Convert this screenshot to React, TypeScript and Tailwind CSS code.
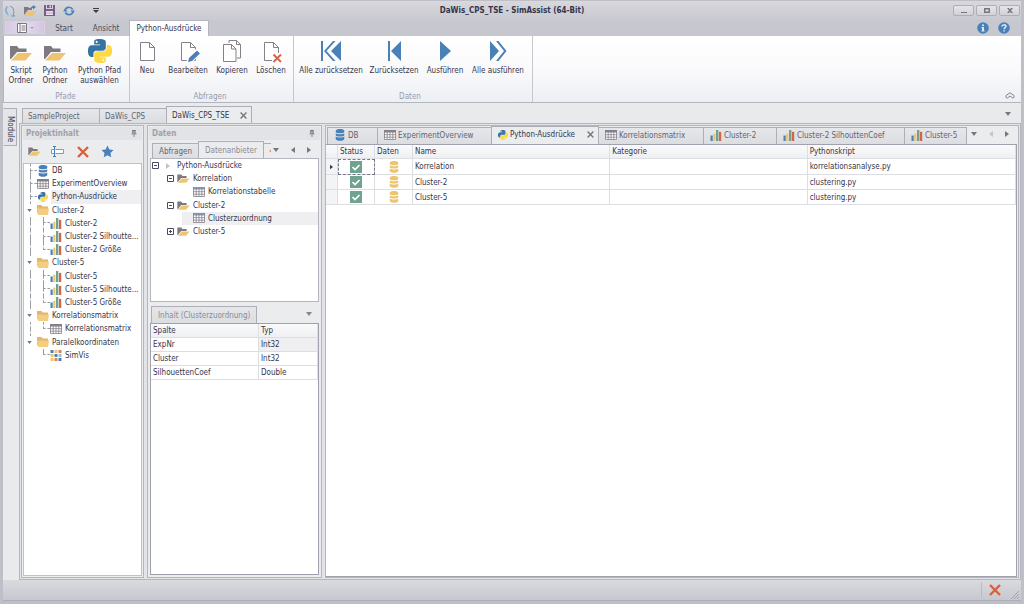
import React from "react";

type IconProps = { className?: string };

const PY_PATH =
  "M14.25.18l.9.2.73.26.59.3.45.32.34.34.25.34.16.33.1.3.04.26.02.2-.01.13V8.5l-.05.63-.13.55-.21.46-.26.38-.3.31-.33.25-.35.19-.35.14-.33.1-.3.07-.26.04-.21.02H8.77l-.69.05-.59.14-.5.22-.41.27-.33.32-.27.35-.2.36-.15.37-.1.35-.07.32-.04.27-.02.21v3.06H3.17l-.21-.03-.28-.07-.32-.12-.35-.18-.36-.26-.36-.36-.35-.46-.32-.59-.28-.73-.21-.88-.14-1.05-.05-1.23.06-1.22.16-1.04.24-.87.32-.71.36-.57.4-.44.42-.33.42-.24.4-.16.36-.1.32-.05.24-.01h.16l.06.01h8.16v-.83H6.18l-.01-2.75-.02-.37.05-.34.11-.31.17-.28.25-.26.31-.23.38-.2.44-.18.51-.15.58-.12.64-.1.71-.06.77-.04.84-.02 1.27.05zm-6.3 1.98l-.23.33-.08.41.08.41.23.34.33.22.41.09.41-.09.33-.22.23-.34.08-.41-.08-.41-.23-.33-.33-.22-.41-.09-.41.09z";

function Svg({ box, className, children }: { box: string; className?: string; children: React.ReactNode }) {
  return (
    <svg viewBox={box} className={`shrink-0 ${className ?? ""}`} aria-hidden="true">
      {children}
    </svg>
  );
}

const Python = ({ className }: IconProps) => (
  <Svg box="0 0 24 24" className={className}>
    <path fill="#3673a5" d={PY_PATH} />
    <path fill="#ffd845" d={PY_PATH} transform="rotate(180 12 12)" />
  </Svg>
);

const OpenFolder = ({ className }: IconProps) => (
  <Svg box="0 0 22 16" className={className}>
    <path fill="#7f7a80" d="M0 1h7l2 2.500h7.500V7H7L1 14H0z" />
    <path fill="#eec471" d="M8 8h14l-6.500 7.500H1z" />
  </Svg>
);

const ClosedFolder = ({ className }: IconProps) => (
  <Svg box="0 0 12 10" className={className}>
    <path fill="#e3b565" d="M0 0h4.500l1 1.500H11V9H1L0 7z" />
    <path fill="#f2cd82" d="M0 3.500h12L11 10H1.200z" />
  </Svg>
);

const Database = ({ className }: IconProps) => (
  <Svg box="0 0 12 14" className={className}>
    <path
      fill="currentColor"
      d="M1 2c0-2.600 10-2.600 10 0v1.200c0 2.400-10 2.400-10 0zM1 5c2 1.500 8 1.500 10 0v1.900c0 2.400-10 2.400-10 0zM1 8.700c2 1.500 8 1.500 10 0v2.900c0 2.800-10 2.800-10 0z"
    />
  </Svg>
);

const Grid = ({ className }: IconProps) => (
  <Svg box="0 0 12 10" className={className}>
    <path fill="#fff" d="M.5.500h11v9H.5z" />
    <path fill="currentColor" d="M0 0h12v2.500H0z" />
    <path stroke="#85808a" strokeWidth=".8" fill="none" d="M.5 0v9.500h11V0M0 4.700h12M0 7.200h12M3.200 0v9.500M6 0v9.500M8.800 0v9.500" />
  </Svg>
);

const Bars = ({ className }: IconProps) => (
  <Svg box="0 0 12 12" className={className}>
    <path fill="#4a80b8" d="M0 6h2.400v6H0z" />
    <path fill="#eec471" d="M3 4h2.400v8H3z" />
    <path fill="#6fa38f" d="M6 0h2.600v12H6z" />
    <path fill="#d3664a" d="M9.200 2h2.500v10H9.200z" />
  </Svg>
);

const Mosaic = ({ className }: IconProps) => (
  <Svg box="0 0 11 11" className={className}>
    <path fill="#4a80b8" d="M0 0h3v3H0zM4 4h3v3H4zM8 8h3v3H8z" />
    <path fill="#eec471" d="M4 0h3v3H4zM0 4h3v3H0zM0 8h3v3H0z" />
    <path fill="#dd8260" d="M8 0h3v3H8zM4 8h3v3H4z" />
    <path fill="#a3bfd7" d="M8 4h3v3H8z" />
  </Svg>
);

const Cross = ({ className }: IconProps) => (
  <Svg box="0 0 12 12" className={className}>
    <path d="M1 1l10 10M11 1L1 11" stroke="currentColor" strokeWidth="2.400" fill="none" />
  </Svg>
);

const Pin = ({ className }: IconProps) => (
  <Svg box="0 0 7 8" className={className}>
    <path d="M2 0h3v4H2z" fill="#aaaab2" />
    <path d="M1.500.5h4M2 0v4M4.700 0v4.500M.5 4.500h6M3.500 5v3" stroke="#747480" fill="none" />
  </Svg>
);

const Down = ({ className }: IconProps) => (
  <Svg box="0 0 6 4" className={className}>
    <path d="M0 0h6L3 4z" fill="currentColor" />
  </Svg>
);

const Side = ({ left, className }: IconProps & { left?: boolean }) => (
  <Svg box="0 0 4 6" className={className}>
    <path d={left ? "M4 0v6L0 3z" : "M0 0v6l4-3z"} fill="currentColor" />
  </Svg>
);

const Page = ({ className, extra, double }: IconProps & { extra?: "edit" | "delete"; double?: boolean }) => (
  <Svg box="0 0 24 24" className={className}>
    {double && <path d="M9 4V1.500h7.500l4 4V19H17M16.500 1.500v4h4" fill="none" stroke="#85808a" />}
    <path
      d={double ? "M3.500 5.500h8l4.500 4.500v12.500H3.500zM11.500 5.500V10H16" : "M5.500 3.500h9l5 5v13h-14zM14.500 3.500v5h5"}
      fill="#fff"
      stroke="#85808a"
    />
    {extra === "edit" && (
      <>
        <path d="M10 24l2-7 8-7h4v5l-8 9z" fill="#fff" />
        <path d="M12 23l1-4 8-7.500 3 3-8 7.500zM12 23z" fill="#4a80b8" />
      </>
    )}
    {extra === "delete" && (
      <>
        <path d="M13 14h11v10H13z" fill="#fff" />
        <path d="M14.500 15.500l7.500 7.500M22 15.500L14.500 23" stroke="#d3664a" strokeWidth="2" />
      </>
    )}
  </Svg>
);

const Media = ({ d, className }: IconProps & { d: string }) => (
  <Svg box="0 0 20 20" className={className}>
    <path d={d} fill="#4a80b8" />
  </Svg>
);

function RibbonButton({ icon, lines, width }: { icon: React.ReactNode; lines: string[]; width: string }) {
  return (
    <button className={`flex flex-col items-center whitespace-nowrap ${width}`}>
      <span className="flex h-[30px] items-center">{icon}</span>
      {lines.map((l) => (
        <span key={l} className="block leading-[10px]">
          {l}
        </span>
      ))}
    </button>
  );
}

function RibbonGroup({ label, pad, children }: { label: string; pad: string; children: React.ReactNode }) {
  return (
    <section aria-label={label} className={`flex flex-col border-r border-[#c6c7ce] ${pad}`}>
      <div className="flex h-[55px]">{children}</div>
      <div className="text-center leading-[11px] text-[#9a9aa8]">{label}</div>
    </section>
  );
}

type Guide = "tee" | "elbow" | "line" | "none" | "arrow";

function GuideCell({ kind }: { kind: Guide }) {
  if (kind === "arrow")
    return (
      <span className="flex w-[13px] shrink-0 items-center pl-[3px]">
        <Down className="h-[3px] w-[5px] text-[#77778a]" />
      </span>
    );
  if (kind === "none") return <span className="w-[13px] shrink-0" />;
  return (
    <span className="grid w-[13px] shrink-0 grid-rows-2 pl-[6px]">
      <span className={`border-l border-dashed border-[#9a9aa8] ${kind === "line" ? "" : "border-b"}`} />
      {kind !== "elbow" && <span className="border-l border-dashed border-[#9a9aa8]" />}
    </span>
  );
}

const barsIcon = <Bars className="h-[11px] w-[12px]" />;
const folderIcon = <ClosedFolder className="h-[10px] w-[12px]" />;
const gridIcon = <Grid className="h-[10px] w-[12px] text-[#85808a]" />;

const projectTree: { g: Guide[]; icon: React.ReactNode; text: string; active?: boolean }[] = [
  { g: ["tee"], icon: <Database className="h-[12px] w-[12px] text-[#4a80b8]" />, text: "DB" },
  { g: ["tee"], icon: gridIcon, text: "ExperimentOverview" },
  { g: ["tee"], icon: <Python className="h-[10px] w-[12px]" />, text: "Python-Ausdrücke", active: true },
  { g: ["arrow"], icon: folderIcon, text: "Cluster-2" },
  { g: ["line", "tee"], icon: barsIcon, text: "Cluster-2" },
  { g: ["line", "tee"], icon: barsIcon, text: "Cluster-2 Silhoutte..." },
  { g: ["line", "elbow"], icon: barsIcon, text: "Cluster-2 Größe" },
  { g: ["arrow"], icon: folderIcon, text: "Cluster-5" },
  { g: ["line", "tee"], icon: barsIcon, text: "Cluster-5" },
  { g: ["line", "tee"], icon: barsIcon, text: "Cluster-5 Silhoutte..." },
  { g: ["line", "elbow"], icon: barsIcon, text: "Cluster-5 Größe" },
  { g: ["arrow"], icon: folderIcon, text: "Korrelationsmatrix" },
  { g: ["line", "elbow"], icon: gridIcon, text: "Korrelationsmatrix" },
  { g: ["arrow"], icon: folderIcon, text: "Paralelkoordinaten" },
  { g: ["none", "elbow"], icon: <Mosaic className="h-[11px] w-[12px]" />, text: "SimVis" },
];

function Expander({ open }: { open: boolean }) {
  return (
    <Svg box="0 0 7 7" className="h-[7px] w-[7px]">
      <path d={open ? "M.5.500h6v6h-6zM2 3.500h3" : "M.5.500h6v6h-6zM2 3.500h3M3.500 2v3"} fill="#fff" stroke="#4b4b60" />
    </Svg>
  );
}

function DockTitle({ children }: { children: React.ReactNode }) {
  return (
    <div className="flex h-[13px] shrink-0 items-center justify-between bg-[#e2e3e6] px-[3px] font-bold text-[#a0a0ac]">
      <h2>{children}</h2>
      <button aria-label="Anheften" className="px-[2px]">
        <Pin className="h-[7px] w-[6px]" />
      </button>
    </div>
  );
}

const TAB = "flex shrink-0 items-center whitespace-nowrap border border-b-0 border-[#adaeb8]";
const TAB_IDLE = "bg-linear-to-b from-[#e6e7ea] to-[#dcdde1]";
const DOCK = "flex flex-col border border-[#b4b5be] bg-[#ebecee] p-px";

const docTabs: { icon: React.ReactNode; text: string; width: string; active?: boolean }[] = [
  { icon: <Database className="h-[12px] w-[12px] text-[#4a80b8]" />, text: "DB", width: "w-[51px]" },
  { icon: gridIcon, text: "ExperimentOverview", width: "w-[115px]" },
  { icon: <Python className="h-[10px] w-[10px]" />, text: "Python-Ausdrücke", width: "w-[108px]", active: true },
  { icon: gridIcon, text: "Korrelationsmatrix", width: "w-[106px]" },
  { icon: barsIcon, text: "Cluster-2", width: "w-[74px]" },
  { icon: barsIcon, text: "Cluster-2 SilhouttenCoef", width: "w-[129px]" },
  { icon: barsIcon, text: "Cluster-5", width: "w-[63px]" },
];

const expressions = [
  { name: "Korrelation", script: "korrelationsanalyse.py" },
  { name: "Cluster-2", script: "clustering.py" },
  { name: "Cluster-5", script: "clustering.py" },
];

const columns = [
  ["ExpNr", "Int32"],
  ["Cluster", "Int32"],
  ["SilhouettenCoef", "Double"],
];

const CELL = "border-r border-b border-[#dddee2] px-[2px] text-left font-normal";

export default function App() {
  return (
    <div className="flex min-h-screen flex-col border-x-[3px] border-t border-b-[3px] border-[#bfbfc8] bg-[#c7c7cf] font-['DejaVu_Sans_Condensed','DejaVu_Sans',sans-serif] text-[8px] leading-[11px] text-[#35354a]">
      {/* Title bar */}
      <header className="grid h-[19px] shrink-0 grid-cols-[1fr_auto_1fr] items-center bg-linear-to-b from-[#d8d8dd] to-[#c9c9d1]">
        <div className="flex items-center gap-[8px] pl-px">
          <Svg box="0 0 12 12" className="h-[12px] w-[12px]">
            <path d="M2 1l3 1-2 2 1 4 3 2-3 1-3-4z" fill="#a9c9e6" />
            <path d="M6 1l3 2 1 4-1 3 2 1H7" fill="none" stroke="#6d9cc8" />
            <path d="M3 1.500L1.500 5l2 4.500" fill="none" stroke="#6d9cc8" />
          </Svg>
          <button aria-label="Öffnen">
            <Svg box="0 0 12 11" className="h-[11px] w-[12px]">
              <path fill="#7f7a80" d="M0 2h4l1 1h3v2H4l-4 5z" />
              <path fill="#eec471" d="M4 6h8l-3 5H0z" />
              <path fill="#4a80b8" d="M6 3l3-2V0l3 2-3 2.500V3z" />
            </Svg>
          </button>
          <button aria-label="Speichern">
            <Svg box="0 0 11 11" className="h-[11px] w-[11px]">
              <path fill="#7d5c8c" d="M0 0h2v4h7V0h2v11H0z" />
              <path fill="#7d5c8c" d="M3 0h5v3H3z" />
              <path fill="#e8e2ec" d="M5.500.5h1.500v2H5.500zM2 6h7v4H2z" />
              <path fill="#b9a9c2" d="M2 7.500h7v1H2z" />
            </Svg>
          </button>
          <button aria-label="Aktualisieren">
            <Svg box="0 0 12 10" className="h-[10px] w-[12px]">
              <path d="M2 4.500C2.600.6 8 .3 9.700 3.500M10 5.500C9.400 9.400 4 9.700 2.300 6.500" fill="none" stroke="#4a80b8" strokeWidth="1.600" />
              <path d="M7.500 4.500H12L9.800 7.500zM0 5.500h4.500L2.200 2.500z" fill="#4a80b8" />
            </Svg>
          </button>
          <button aria-label="Schnellzugriff anpassen" className="ml-[10px]">
            <Svg box="0 0 6 5" className="h-[5px] w-[6px]">
              <path d="M0 0h6v1H0zM0 2h6L3 5z" fill="#3b3b4d" />
            </Svg>
          </button>
        </div>
        <h1 className="font-bold">DaWis_CPS_TSE - SimAssist (64-Bit)</h1>
        <div className="flex justify-end gap-[2px] pr-px">
          {["M3 6h6v1H3z", "M3 2h6v5H3zM4.500 3.500v2h3v-2z", "M3 2h2l1 1.500L7 2h2L7 4.500 9 7H7L6 5.500 5 7H3L5 4.500z"].map((d, i) => (
            <button
              key={d}
              aria-label={["Minimieren", "Maximieren", "Schließen"][i]}
              className="flex h-[11px] w-[21px] items-center justify-center rounded-[2px] border border-[#aeaeb8] bg-linear-to-b from-[#e6e6ea] to-[#d0d0d6]"
            >
              <Svg box="0 0 12 9" className="h-[9px] w-[12px]">
                <path d={d} fill="#77777f" fillRule="evenodd" />
              </Svg>
            </button>
          ))}
        </div>
      </header>

      {/* Ribbon tabs */}
      <nav className="flex h-[16px] shrink-0 items-stretch">
        <button
          aria-label="Datei"
          className="mt-px mb-[2px] ml-[2px] flex w-[40px] items-center justify-center gap-[3px] border border-[#d9d0e4] bg-linear-to-r from-[#d6c9e4] via-[#e4dcec] to-[#d3c4e2]"
        >
          <Svg box="0 0 10 10" className="h-[10px] w-[10px]">
            <path d="M.5.500h9v9h-9z" fill="#fff" stroke="#77777f" />
            <path d="M3 0v10M4.500 3h4M4.500 5h4M4.500 7h4" stroke="#77777f" fill="none" />
          </Svg>
          <Down className="h-[2px] w-[4px] text-[#9a93a3]" />
        </button>
        <a href="#start" className="flex w-[38px] items-center justify-center text-[#4b4b60]">
          Start
        </a>
        <a href="#ansicht" className="flex w-[46px] items-center justify-center text-[#4b4b60]">
          Ansicht
        </a>
        <a href="#python" className="flex w-[80px] items-center justify-center border border-b-0 border-[#b4b5be] bg-white whitespace-nowrap">
          Python-Ausdrücke
        </a>
        <div className="ml-auto flex items-center gap-[9px] pr-[11px]">
          <button aria-label="Info">
            <Svg box="0 0 12 12" className="h-[12px] w-[12px]">
              <circle cx="6" cy="6" r="5.800" fill="#4a80b8" />
              <path d="M5 2.500h2v1.500H5zM4.500 5H7v3.500h.6v1H4.500v-1H5V6h-.5z" fill="#dce8f3" />
            </Svg>
          </button>
          <button aria-label="Hilfe">
            <Svg box="0 0 12 12" className="h-[12px] w-[12px]">
              <circle cx="6" cy="6" r="5.800" fill="#4a80b8" />
              <path d="M4 4.500C4 2.300 8 2.300 8 4.300 8 5.700 6.100 5.600 6.100 7.200M6.100 8.200v1.400" stroke="#e4edf6" strokeWidth="1.400" fill="none" />
            </Svg>
          </button>
        </div>
      </nav>

      {/* Ribbon */}
      <div className="flex h-[67px] shrink-0 border-b border-l border-[#b4b5be] bg-linear-to-b from-white via-[#fafafc] to-[#edeff4]">
        <RibbonGroup label="Pfade" pad="pr-[2px]">
          <RibbonButton width="w-[34px]" lines={["Skript", "Ordner"]} icon={<OpenFolder className="mt-1 h-[16px] w-[22px]" />} />
          <RibbonButton width="w-[34px]" lines={["Python", "Ordner"]} icon={<OpenFolder className="mt-1 h-[16px] w-[22px]" />} />
          <RibbonButton width="w-[55px]" lines={["Python Pfad", "auswählen"]} icon={<Python className="h-[24px] w-[24px]" />} />
        </RibbonGroup>
        <RibbonGroup label="Abfragen" pad="pr-[3px]">
          <RibbonButton width="w-[34px]" lines={["Neu"]} icon={<Page className="h-[24px] w-[24px]" />} />
          <RibbonButton width="w-[48px]" lines={["Bearbeiten"]} icon={<Page extra="edit" className="h-[24px] w-[24px]" />} />
          <RibbonButton width="w-[40px]" lines={["Kopieren"]} icon={<Page double className="h-[24px] w-[24px]" />} />
          <RibbonButton width="w-[38px]" lines={["Löschen"]} icon={<Page extra="delete" className="h-[24px] w-[24px]" />} />
        </RibbonGroup>
        <RibbonGroup label="Daten" pad="pr-[6px]">
          <RibbonButton
            width="w-[74px]"
            lines={["Alle zurücksetzen"]}
            icon={<Media className="h-[20px] w-[20px]" d="M0 0h2v20H0zM20 0v20L10 10zM12 0h2.500L5.500 10l9 10H12L3 10z" />}
          />
          <RibbonButton width="w-[52px]" lines={["Zurücksetzen"]} icon={<Media className="h-[20px] w-[20px]" d="M4 0h2v20H4zM17 0v20L7 10z" />} />
          <RibbonButton width="w-[50px]" lines={["Ausführen"]} icon={<Media className="h-[20px] w-[20px]" d="M5 0l11 10L5 20z" />} />
          <RibbonButton
            width="w-[56px]"
            lines={["Alle ausführen"]}
            icon={<Media className="h-[20px] w-[20px]" d="M2 0l9 10-9 10zM8 0h2.500l8 10-8 10H8l8-10z" />}
          />
        </RibbonGroup>
        <button aria-label="Menüband minimieren" className="mt-auto mr-[6px] mb-[3px] ml-auto">
          <Svg box="0 0 10 7" className="h-[7px] w-[10px]">
            <path d="M1 3.500L5 .8l4 2.700v2L7.500 6 5 4 2.500 6 1 5.500z" fill="none" stroke="#85858f" />
          </Svg>
        </button>
      </div>

      {/* Workspace */}
      <div className="flex flex-1 bg-[#e9eaec] pt-[4px]">
        <button className="mt-px flex h-[38px] w-[14px] shrink-0 justify-center self-start border border-[#adaeb8] border-l-transparent bg-[#e4e5e8] pt-[4px] leading-[12px] [writing-mode:vertical-rl]">
          Module
        </button>
        <div className="ml-[2px] flex min-w-0 flex-1 flex-col">
          <div className="flex h-[16px] shrink-0 items-end pl-[3px]" role="tablist">
            <button role="tab" className={`${TAB} ${TAB_IDLE} h-[15px] w-[77px] border-r-0 px-[5px] text-[#63636f]`}>
              SampleProject
            </button>
            <button role="tab" className={`${TAB} ${TAB_IDLE} h-[15px] w-[67px] border-r-0 px-[5px] text-[#63636f]`}>
              DaWis_CPS
            </button>
            <div className={`${TAB} h-[17px] w-[86px] justify-between bg-[#ebecee] pr-[4px] pl-[5px]`}>
              <button role="tab" aria-selected="true">
                DaWis_CPS_TSE
              </button>
              <button aria-label="Schließen">
                <Cross className="h-[7px] w-[7px] text-[#77777f]" />
              </button>
            </div>
            <button aria-label="Fensterliste" className="mr-[10px] mb-[7px] ml-auto">
              <Down className="h-[4px] w-[6px] text-[#77777f]" />
            </button>
          </div>

          <div className="flex flex-1 border border-[#b4b5be] bg-[#e3e4e7] p-[1px]">
            {/* Project content */}
            <aside className={`${DOCK} w-[123px] shrink-0`}>
              <DockTitle>Projektinhalt</DockTitle>
              <div className="flex h-[23px] shrink-0 items-center pl-[5px]">
                <button aria-label="Öffnen" className="w-[23px]">
                  <OpenFolder className="h-[9px] w-[13px]" />
                </button>
                <button aria-label="Umbenennen" className="w-[26px]">
                  <Svg box="0 0 13 11" className="h-[11px] w-[13px]">
                    <path d="M3 3.500H.5v4H3M4.500 3.500h8v4h-8" fill="#fff" stroke="#96969f" />
                    <path d="M2 .5h3M2 10.500h3M3.500 0v11" stroke="#4a80b8" fill="none" />
                  </Svg>
                </button>
                <button aria-label="Löschen" className="w-[24px] text-[#dc5f3c]">
                  <Cross className="h-[12px] w-[12px]" />
                </button>
                <button aria-label="Favorit">
                  <Svg box="0 0 24 24" className="h-[13px] w-[13px]">
                    <path d="M12 1l3.400 7.200 7.800 1-5.700 5.500 1.400 7.900L12 18.800l-6.900 3.800 1.400-7.900L.8 9.200l7.800-1z" fill="#4a80b8" />
                  </Svg>
                </button>
              </div>
              <div className="flex-1 border border-[#c0c1c9] bg-white">
                <ul className="grid h-[198px] auto-rows-fr grid-cols-1">
                  {projectTree.map((n, i) => (
                    <li key={i} className="flex min-w-0">
                      {n.g.map((k, j) => (
                        <GuideCell key={j} kind={k} />
                      ))}
                      <span className="flex w-[14px] shrink-0 items-center">{n.icon}</span>
                      <span className={`flex min-w-0 flex-1 items-center ${n.active ? "bg-[#efeff1]" : ""}`}>
                        <span className="pl-px whitespace-nowrap">{n.text}</span>
                      </span>
                    </li>
                  ))}
                </ul>
              </div>
            </aside>

            {/* Data */}
            <aside className={`${DOCK} ml-[3px] w-[175px] shrink-0`}>
              <DockTitle>Daten</DockTitle>
              <div className="flex flex-1 flex-col px-px pt-px pb-px">
                <div className="flex h-[17px] shrink-0 items-end pl-[2px]" role="tablist">
                  <button role="tab" className={`${TAB} ${TAB_IDLE} h-[15px] w-[46px] justify-center border-r-0 text-[#63636f]`}>
                    Abfragen
                  </button>
                  <button role="tab" aria-selected="true" className={`${TAB} h-[17px] w-[66px] justify-center bg-[#ebecee] text-[#8b8b97]`}>
                    Datenanbieter
                  </button>
                  <button
                    role="tab"
                    aria-label="Weiterer Reiter"
                    className="flex h-[15px] w-[7px] items-center justify-end border-t border-[#adaeb8]"
                  >
                    <Side left className="h-[4px] w-[2px] text-[#e0936c]" />
                  </button>
                  <div className="mr-[8px] mb-[5px] ml-auto flex items-center gap-[12px] text-[#77777f]">
                    <button aria-label="Liste">
                      <Down className="h-[4px] w-[6px]" />
                    </button>
                    <button aria-label="Zurück">
                      <Side left className="h-[6px] w-[4px]" />
                    </button>
                    <button aria-label="Weiter">
                      <Side className="h-[6px] w-[4px]" />
                    </button>
                  </div>
                </div>
                <div className="h-[144px] shrink-0 border border-[#b4b5be] bg-white">
                  <ul className="grid h-[79px] auto-rows-fr">
                    <li className="flex items-center pl-px">
                      <Expander open />
                      <Side className="ml-[7px] h-[6px] w-[4px] text-[#c3c3cb]" />
                      <span className="ml-[7px]">Python-Ausdrücke</span>
                    </li>
                    {[
                      { t: "Korrelation", open: true },
                      { t: "Korrelationstabelle", leaf: true },
                      { t: "Cluster-2", open: true },
                      { t: "Clusterzuordnung", leaf: true, active: true },
                      { t: "Cluster-5", open: false },
                    ].map((n) =>
                      n.leaf ? (
                        <li key={n.t} className={`ml-[31px] flex items-center gap-[3px] pl-[11px] ${n.active ? "bg-[#efeff1]" : ""}`}>
                          <Grid className="h-[10px] w-[12px] text-[#7fa0c0]" />
                          {n.t}
                        </li>
                      ) : (
                        <li key={n.t} className="flex items-center gap-[3px] pl-[16px]">
                          <Expander open={!!n.open} />
                          <OpenFolder className="h-[9px] w-[13px]" />
                          {n.t}
                        </li>
                      ),
                    )}
                  </ul>
                </div>
                <div className="mt-[4px] flex h-[17px] shrink-0 items-center justify-between pr-[7px] pl-px">
                  <h3 className={`${TAB} ${TAB_IDLE} h-full px-[6px] text-[#8b8b97]`}>Inhalt (Clusterzuordnung)</h3>
                  <button aria-label="Liste" className="pb-[2px]">
                    <Down className="h-[4px] w-[6px] text-[#85858f]" />
                  </button>
                </div>
                <div className="flex-1 border border-[#a0a1ac] bg-white">
                  <table className="w-full table-fixed border-separate border-spacing-0">
                    <colgroup>
                      <col className="w-[108px]" />
                      <col />
                    </colgroup>
                    <thead>
                      <tr className="h-[14px] bg-linear-to-b from-[#fafafb] to-[#eeeff1]">
                        <th className={CELL}>Spalte</th>
                        <th className={CELL}>Typ</th>
                      </tr>
                    </thead>
                    <tbody>
                      {columns.map(([a, b], i) => (
                        <tr key={a} className="h-[14px]">
                          <td className={CELL}>{a}</td>
                          <td className={`${CELL} ${i === 0 ? "bg-[#efeff1]" : ""}`}>{b}</td>
                        </tr>
                      ))}
                    </tbody>
                  </table>
                </div>
              </div>
            </aside>

            {/* Document */}
            <main className="ml-[3px] flex min-w-0 flex-1 flex-col border border-[#b4b5be] bg-[#ebecee] pr-px">
              <div className="flex h-[18px] shrink-0 items-end pl-px" role="tablist">
                {docTabs.map((t) => (
                  <div
                    key={t.text}
                    className={`${TAB} ${t.width} -mr-px pb-[2px] pl-[6px] ${t.active ? "h-[18px] bg-[#ebecee]" : `h-[17px] text-[#63636f] ${TAB_IDLE}`}`}
                  >
                    <button role="tab" aria-selected={!!t.active} className="flex items-center gap-[2px]">
                      {t.icon}
                      {t.text}
                    </button>
                    {t.active && (
                      <button aria-label="Schließen" className="mr-[4px] ml-auto">
                        <Cross className="h-[7px] w-[7px] text-[#77777f]" />
                      </button>
                    )}
                  </div>
                ))}
                <div className="mr-[8px] mb-[7px] ml-auto flex items-center gap-[12px] text-[#77777f]">
                  <button aria-label="Liste">
                    <Down className="h-[4px] w-[6px]" />
                  </button>
                  <button aria-label="Zurück" className="text-[#c3c3cb]">
                    <Side left className="h-[6px] w-[4px]" />
                  </button>
                  <button aria-label="Weiter">
                    <Side className="h-[6px] w-[4px]" />
                  </button>
                </div>
              </div>
              <div className="flex-1 border border-l-0 border-[#a0a1ac] bg-white">
                <table className="w-full table-fixed border-separate border-spacing-0">
                  <colgroup>
                    <col className="w-[12px]" />
                    <col className="w-[37px]" />
                    <col className="w-[38px]" />
                    <col className="w-[28.6%]" />
                    <col className="w-[28.6%]" />
                    <col />
                  </colgroup>
                  <thead>
                    <tr className="h-[14px] bg-linear-to-b from-[#fafafb] to-[#eeeff1]">
                      <th className={CELL} aria-label="Zeile" />
                      {["Status", "Daten", "Name", "Kategorie", "Pythonskript"].map((h) => (
                        <th key={h} className={CELL}>
                          {h}
                        </th>
                      ))}
                    </tr>
                  </thead>
                  <tbody>
                    {expressions.map((e, i) => (
                      <tr key={e.name} className={i === 0 ? "h-[16px]" : "h-[15px]"}>
                        <td className="border-r border-b border-[#dddee2] bg-[#f3f4f6] pl-[4px]">
                          {i === 0 && <Side className="h-[6px] w-[3px] text-[#35354a]" />}
                        </td>
                        <td className={`border-r border-b ${i === 0 ? "border-[#dddee2] outline outline-offset-[-1px] outline-dashed outline-[#77778a]" : "border-[#dddee2]"}`}>
                          <label className="mx-auto grid h-[12px] w-[12px]">
                            <input
                              type="checkbox"
                              defaultChecked
                              aria-label={`${e.name} aktiv`}
                              className="peer col-start-1 row-start-1 h-[12px] w-[12px] appearance-none border border-[#6fa38f] checked:bg-[#6fa38f]"
                            />
                            <Svg box="0 0 12 12" className="pointer-events-none invisible col-start-1 row-start-1 h-[12px] w-[12px] peer-checked:visible">
                              <path d="M2.500 6l2.500 2.500L9.500 4" stroke="#fff" strokeWidth="1.700" fill="none" />
                            </Svg>
                          </label>
                        </td>
                        <td className="border-r border-b border-[#dddee2]">
                          <Database className="mx-auto h-[12px] w-[12px] text-[#eec471]" />
                        </td>
                        <td className={CELL}>{e.name}</td>
                        <td className={CELL} />
                        <td className={CELL}>{e.script}</td>
                      </tr>
                    ))}
                  </tbody>
                </table>
              </div>
            </main>
          </div>
        </div>
      </div>

      {/* Status bar */}
      <footer className="flex h-[21px] shrink-0 items-center justify-end border-b border-[#adaeb8] bg-linear-to-b from-[#dadbde] to-[#c7c7d0]">
        <button aria-label="Abbrechen" className="border-l border-[#b9bac3] py-[2px] pr-[9px] pl-[7px] text-[#dc5f3c]">
          <Cross className="h-[12px] w-[12px]" />
        </button>
        <Svg box="0 0 10 10" className="mr-px h-[10px] w-[10px] self-end">
          <path d="M1 9l8-8M4 9l5-5M7 9l2-2" stroke="#a3a4ae" fill="none" />
        </Svg>
      </footer>
    </div>
  );
}
